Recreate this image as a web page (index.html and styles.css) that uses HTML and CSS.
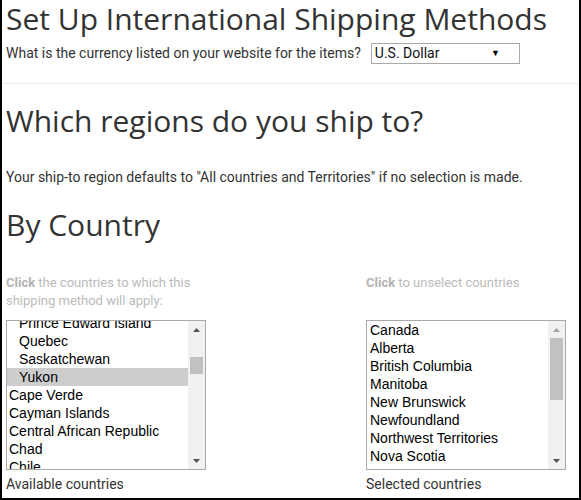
FILE: index.html
```html
<!DOCTYPE html>
<html>
<head>
<meta charset="utf-8">
<link rel="stylesheet" href="styles.css">
</head>
<body>
<div class="frame">
  <h1 class="title">Set Up International Shipping Methods</h1>
  <div class="currency-row">
    <span class="currency-label">What is the currency listed on your website for the items?</span>
    <div class="select">
      <span class="select-value">U.S. Dollar</span>
      <span class="select-arrow">▼</span>
    </div>
  </div>
  <div class="rule"></div>
  <h2 class="heading regions">Which regions do you ship to?</h2>
  <p class="note">Your ship-to region defaults to "All countries and Territories" if no selection is made.</p>
  <h2 class="heading country">By Country</h2>
  <div class="columns">
    <div class="col">
      <p class="hint"><b>Click</b> the countries to which this shipping method will apply:</p>
      <div class="listbox">
        <div class="list-area">
          <ul class="items scrolled">
            <li class="sub">Prince Edward Island</li>
            <li class="sub">Quebec</li>
            <li class="sub">Saskatchewan</li>
            <li class="sub selected">Yukon</li>
            <li>Cape Verde</li>
            <li>Cayman Islands</li>
            <li>Central African Republic</li>
            <li>Chad</li>
            <li>Chile</li>
          </ul>
        </div>
        <div class="scrollbar">
          <div class="arrow up">
            <svg width="7" height="4" viewBox="0 0 7 4"><path d="M0 4 L3.5 0 L7 4 Z" fill="#505050"/></svg>
          </div>
          <div class="track">
            <div class="thumb thumb-left"></div>
          </div>
          <div class="arrow down">
            <svg width="7" height="4" viewBox="0 0 7 4"><path d="M0 0 L7 0 L3.5 4 Z" fill="#505050"/></svg>
          </div>
        </div>
      </div>
      <div class="caption">Available countries</div>
    </div>
    <div class="col">
      <p class="hint"><b>Click</b> to unselect countries</p>
      <div class="listbox">
        <div class="list-area">
          <ul class="items right">
            <li>Canada</li>
            <li>Alberta</li>
            <li>British Columbia</li>
            <li>Manitoba</li>
            <li>New Brunswick</li>
            <li>Newfoundland</li>
            <li>Northwest Territories</li>
            <li>Nova Scotia</li>
            <li>Nunavut</li>
          </ul>
        </div>
        <div class="scrollbar">
          <div class="arrow up">
            <svg width="7" height="4" viewBox="0 0 7 4"><path d="M0 4 L3.5 0 L7 4 Z" fill="#a3a3a3"/></svg>
          </div>
          <div class="track">
            <div class="thumb thumb-right"></div>
          </div>
          <div class="arrow down">
            <svg width="7" height="4" viewBox="0 0 7 4"><path d="M0 0 L7 0 L3.5 4 Z" fill="#505050"/></svg>
          </div>
        </div>
      </div>
      <div class="caption">Selected countries</div>
    </div>
  </div>
</div>
</body>
</html>
```

FILE: styles.css
```css
* { box-sizing: border-box; }
html, body { margin: 0; padding: 0; background: #fff; }
.frame {
  width: 581px;
  height: 500px;
  overflow: hidden;
  border-left: 2px solid #000;
  border-right: 2px solid #000;
  border-bottom: 2px solid #000;
  color: #333;
  font-family: Roboto, "Liberation Sans", sans-serif;
  font-size: 14px;
}
.title {
  margin: 0;
  padding-left: 4px;
  font-family: "Open Sans", sans-serif;
  font-weight: 400;
  font-size: 30px;
  line-height: 37px;
  color: #333;
  white-space: nowrap;
}
.currency-row {
  display: flex;
  align-items: center;
  gap: 10px;
  margin-top: 6px;
  padding-left: 4px;
  height: 20px;
}
.currency-label { white-space: nowrap; }
.select {
  width: 149px;
  height: 21px;
  border: 1px solid #a9a9a9;
  background: #fff;
  display: flex;
  align-items: center;
  justify-content: space-between;
  padding: 0 19px 0 3px;
  font-size: 14px;
  color: #111;
}
.select-arrow { font-size: 9px; color: #000; }
.rule {
  margin-top: 20px;
  height: 1px;
  background: #ececec;
}
.heading {
  margin: 0;
  padding-left: 4px;
  font-family: "Open Sans", sans-serif;
  font-weight: 400;
  font-size: 30px;
  line-height: 40px;
  color: #333;
}
.regions { margin-top: 17px; }
.note { margin: 27px 0 0; padding-left: 4px; line-height: 18px; }
.country { margin-top: 19px; }
.columns {
  display: grid;
  grid-template-columns: 200px 200px;
  column-gap: 160px;
  padding-left: 4px;
  margin-top: 29px;
}
.hint {
  margin: 0;
  color: #bbb;
  font-size: 13px;
  line-height: 18px;
  height: 46px;
}
.hint b { font-weight: 700; color: #b3b3b3; }
.listbox {
  height: 150px;
  border: 1px solid #a9a9a9;
  display: flex;
  background: #fff;
}
.list-area { flex: 1; overflow: hidden; }
.items {
  list-style: none;
  margin: 0;
  padding: 0;
  font-family: "Liberation Sans", Arial, sans-serif;
  font-size: 14px;
  color: #000;
}
.items li { height: 18px; line-height: 18px; padding-left: 2px; white-space: nowrap; }
.items li.sub { padding-left: 12px; }
.items li.selected { background: #cdcdcd; }
.items.scrolled { margin-top: -7px; }
.items.right li { padding-left: 3px; }
.scrollbar {
  width: 17px;
  background: #f1f1f1;
  display: flex;
  flex-direction: column;
}
.arrow {
  height: 17px;
  display: flex;
  align-items: center;
  justify-content: center;
}
.track { flex: 1; padding: 0 2px; }
.thumb { background: #c1c1c1; }
.thumb-left { margin-top: 19px; height: 17px; }
.thumb-right { margin-top: 0; height: 62px; }
.caption { margin-top: 5px; line-height: 18px; }
```
